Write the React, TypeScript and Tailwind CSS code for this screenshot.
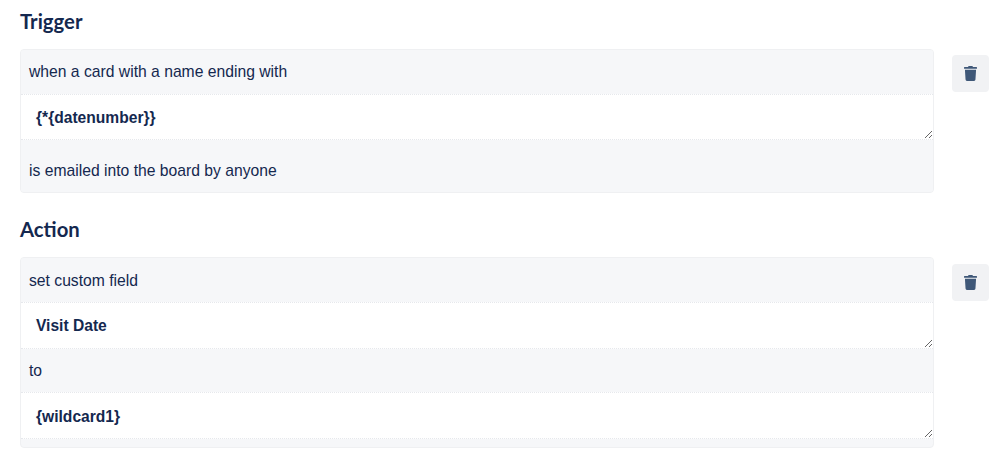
import React from 'react';
import { FaTrash } from 'react-icons/fa';

const sans = "font-['Liberation_Sans',Arial,sans-serif]";

const TextRow: React.FC<{ text: string; className: string }> = ({ text, className }) => (
    <div className={`bg-[#f6f7f9] pl-[8px] text-[15.7px] text-[#14284f] flex items-center ${className}`}>{text}</div>
);

const FieldRow: React.FC<{ value: string; className: string }> = ({ value, className }) => (
    <textarea
        readOnly
        defaultValue={value}
        className={`block w-full bg-white border-y border-dotted border-[#e6e8ec] pl-[15px] pr-2 pb-0 text-[15.6px] leading-[18px] font-bold text-[#14284f] outline-none resize-y ${className}`}
    />
);

const DeleteButton: React.FC<{ top: string }> = ({ top }) => (
    <button aria-label="Delete" className={`w-[37px] h-[37px] ml-[18px] shrink-0 rounded bg-[#f1f2f4] flex items-center justify-center text-[#3f5878] ${top}`}>
        <FaTrash className="w-[13px] h-[15px]" />
    </button>
);

const Section: React.FC<{ title: string; top: string; buttonTop: string; children: React.ReactNode }> = ({ title, top, buttonTop, children }) => (
    <section>
        <h2 className={`font-['Lato',sans-serif] font-bold text-[20.3px] leading-6 text-[#14284f] ${top}`}>{title}</h2>
        <div className="flex items-start mt-[16px]">
            <div className="w-[914px] shrink-0 rounded border border-[#eff0f2] bg-[#f6f7f9] overflow-hidden">{children}</div>
            <DeleteButton top={buttonTop} />
        </div>
    </section>
);

export default function App() {
    return (
        <div className={`w-[998px] h-[453px] overflow-hidden bg-white px-5 pt-[9px] ${sans}`}>
            <Section title="Trigger" top="" buttonTop="mt-[6px]">
                <TextRow text="when a card with a name ending with" className="h-[44px]" />
                <FieldRow value="{*{datenumber}}" className="h-[46px] pt-[14px]" />
                <TextRow text="is emailed into the board by anyone" className="h-[52px] pt-[10px]" />
            </Section>
            <Section title="Action" top="mt-[24px]" buttonTop="mt-[7px]">
                <TextRow text="set custom field" className="h-[44px] pt-[2px]" />
                <FieldRow value="Visit Date" className="h-[47px] pt-[14px]" />
                <TextRow text="to" className="h-[43px]" />
                <FieldRow value="{wildcard1}" className="h-[47px] pt-[15px]" />
                <div className="h-[8px]" />
            </Section>
        </div>
    );
}
